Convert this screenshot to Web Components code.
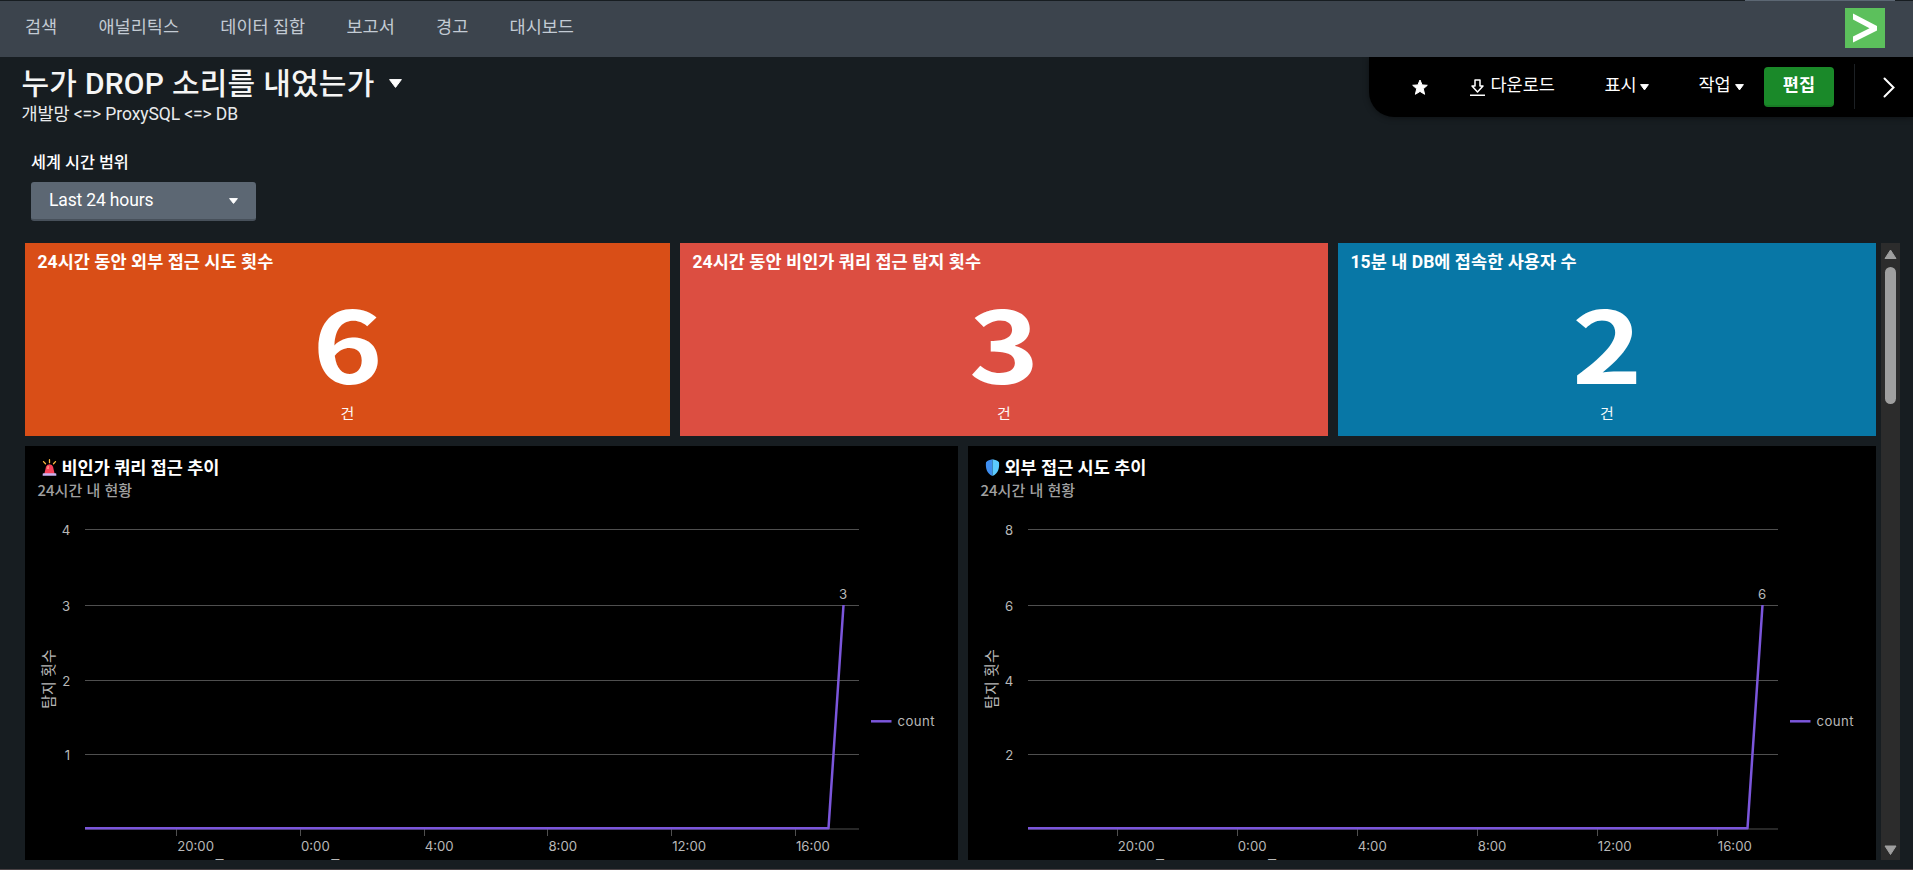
<!DOCTYPE html>
<html lang="ko">
<head>
<meta charset="utf-8">
<title>대시보드</title>
<style>
html,body{margin:0;height:100%}
body{background:#171d21;color:#fff;font-family:Roboto,"Noto Sans CJK KR",sans-serif;font-size:17.5px;overflow:hidden}
</style>
</head>
<body>
<dash-app></dash-app>
<script>
const define=(name,html)=>customElements.define(name,class extends HTMLElement{
  connectedCallback(){
    if(this.shadowRoot)return;
    const t=document.createElement('template');
    t.innerHTML=typeof html==='function'?html(this):html;
    this.attachShadow({mode:'open'}).append(t.content.cloneNode(true));
  }
});

define('nav-link',`<style>:host{display:block;color:#c3cbd4;line-height:26px;white-space:nowrap}</style><slot></slot>`);

define('brand-logo',`<style>:host{display:block;width:40px;height:40px;background:#5cc05c}svg{display:block}</style>
<svg width="40" height="40" viewBox="0 0 40 40"><path fill="#fff" d="M8 5.500 32 18v4.500L8 34.500v-6L24.500 20.200 8 11.500z"/></svg>`);

define('app-nav',`<style>
:host{display:flex;box-sizing:border-box;height:57px;background:#3c444d;border-top:1px solid #171d21;padding:7px 28px 0 25px;align-items:flex-start;position:relative}
nav{display:flex;gap:41.3px;padding-top:6px;flex:1}
i{position:absolute;top:-1px;left:1745px;width:150px;height:1px;background:#5c6773}
</style><nav><nav-link>검색</nav-link><nav-link>애널리틱스</nav-link><nav-link>데이터 집합</nav-link><nav-link>보고서</nav-link><nav-link>경고</nav-link><nav-link>대시보드</nav-link></nav><brand-logo></brand-logo><i></i>`);

define('caret-down',el=>{const w=+el.getAttribute('w'),h=+el.getAttribute('h');return `<style>:host{display:block;flex:none}svg{display:block}</style>
<svg width="${w}" height="${h}" viewBox="0 0 ${w} ${h}"><path fill="#fff" stroke="#fff" stroke-linejoin="round" d="M.6 .6H${w-.6}L${w/2} ${h-.6}z"/></svg>`});

define('tool-bar',`<style>
:host{display:flex;box-sizing:border-box;width:544px;height:60px;background:#000;border-bottom-left-radius:25px;box-shadow:0 1px 6px #0006;padding:10px 18px 0 43px;align-items:flex-start}
svg{display:block;flex:none}
.t{display:flex;align-items:flex-start;line-height:26px;padding-top:5px;white-space:nowrap}
.star{margin-top:12px}
.dl{margin-left:42px}.dl svg{margin:7px 5.500px 0 0}
.v{margin-left:49.500px;width:44.500px;justify-content:space-between}.w{margin-left:49.500px;width:46px;justify-content:space-between}
caret-down{margin-top:12px}
b{box-sizing:border-box;width:70px;height:40px;border-radius:4px;background:#1a8929;border-bottom:2px solid #187c25;text-align:center;line-height:37px;margin-left:19.500px;font-weight:700}
hr{margin:-3px 0 0 20px;border:0;width:1px;height:45px;background:#1c2024}
.ch{margin:10px 0 0 28px}
</style>
<svg class="star" width="16" height="17" viewBox="0 0 16 17"><path fill="#fff" stroke="#fff" stroke-linejoin="round" d="M8 1l2.100 4.900 5.200.4-4 3.500 1.300 5.500L8 12.400l-4.600 2.900 1.300-5.500-4-3.500 5.200-.4z"/></svg>
<div class="t dl"><svg width="15" height="18" viewBox="0 0 15 18"><path fill="none" stroke="#fff" stroke-width="1.500" stroke-linejoin="round" d="M5 1h5v6h3L7.500 12.900 2 7h3z"/><path fill="#fff" d="M0 15.500h15V17H0z"/></svg>다운로드</div>
<div class="t v">표시<caret-down w="9" h="6.5"></caret-down></div>
<div class="t w">작업<caret-down w="9" h="6.5"></caret-down></div>
<b>편집</b><hr>
<svg class="ch" width="12" height="21" viewBox="0 0 12 21"><path fill="none" stroke="#fff" stroke-width="2" stroke-linecap="round" d="M1.500 1.500 10.500 10.500 1.500 19.500"/></svg>`);

define('page-head',`<style>
:host{display:flex;height:75px;justify-content:space-between}
.l{padding:9px 0 0 21.500px}
h1{display:flex;align-items:flex-start;gap:16px;margin:0;font-size:30px;font-weight:500;line-height:36px;white-space:nowrap;color:#f5f5f5;letter-spacing:.25px}
h1 span{width:351px}
caret-down{margin-top:13px}
p{margin:-1px 0 0;font-size:17.500px;line-height:26px;white-space:nowrap;color:#e8eaec;letter-spacing:-.1px}
</style>
<div class="l"><h1><span>누가 DROP 소리를 내었는가</span><caret-down w="13" h="9"></caret-down></h1><p>개발망 &lt;=&gt; ProxySQL &lt;=&gt; DB</p></div>
<tool-bar></tool-bar>`);

define('time-input',`<style>
:host{display:block;height:111px;box-sizing:border-box;padding:18px 0 0 31px}
label{display:block;font-size:16.250px;font-weight:500;line-height:26px;margin-bottom:6px}
div{display:flex;box-sizing:border-box;width:225px;height:39px;border-radius:3px;background:#5c6773;border-bottom:2px solid #47505a;padding:0 18px;justify-content:space-between;align-items:flex-start;line-height:36px}
span{letter-spacing:-.15px}
caret-down{margin-top:16px}
</style><label>세계 시간 범위</label><div><span>Last 24 hours</span><caret-down w="9" h="6"></caret-down></div>`);

define('stat-card',el=>`<style>
:host{display:block;box-sizing:border-box;height:193px;background:var(--c);text-align:center;padding-top:6px}
h2{margin:0 0 0 12.500px;text-align:left;font-size:17.500px;font-weight:700;line-height:26px;white-space:nowrap;letter-spacing:.04px}
.n{font:700 100px/110px "Noto Sans CJK KR",sans-serif;margin-top:10.500px;transform:scaleX(1.19)}
.u{font-size:15px;line-height:22px;margin-top:7.500px;opacity:.95}
</style><h2><slot></slot></h2><div class="n">${el.getAttribute('value')}</div><div class="u">건</div>`);

const icons={
siren:`<path stroke="#fbb83e" stroke-width="1.300" stroke-linecap="round" d="M7.500 .7v3M1.500 2.600l2 2.200M13.500 2.600l-2 2.200"/><path fill="#f8415a" d="M2.300 15 4 7.800Q4.600 5.300 7.500 5.300T11 7.800L12.700 15z"/><path fill="#ff8a7a" d="M5.500 7h1.500v3H4.800z"/><path fill="#cbb2f2" d="M1.500 14.200h12q.8 0 .8.900v1.700H.7v-1.700q0-.9.800-.9z"/>`,
shield:`<path fill="#3e8ef0" d="M7.500 .3C5 .8 2.500 1.300 1 3.200 .4 8.500 1.500 14.500 7.500 17z"/><path fill="#5ccbff" d="M7.500 .3C10 .8 12.500 1.300 14 3.200 14.600 8.500 13.500 14.500 7.500 17z"/>`};

define('chart-panel',el=>{
  const w=+el.getAttribute('w'),step=+el.getAttribute('step'),t0=+el.getAttribute('tick'),gap=+el.getAttribute('gap');
  const right=w-+el.getAttribute('inset'),ys=[83.5,159.5,234.5,308.5];
  const y0=382.5,x1=right-30.5,x2=right-15.5,peak=step*3;
  return `<style>
:host{display:block;position:relative;height:414px;width:${w}px;background:#000;overflow:hidden}
header{padding:8.500px 0 0 12.500px}
h2{display:flex;gap:4.500px;margin:0;padding-left:4.500px;font-size:17.500px;font-weight:700;line-height:26px;white-space:nowrap}
h2 svg{margin-top:4.500px}
p{margin:0;color:#a0a0a0;font-size:15px;font-weight:500;line-height:17px;white-space:nowrap;font-family:"Noto Sans CJK KR",sans-serif}
.plot{position:absolute;left:0;top:0}
text{font-family:Inter,"Noto Sans CJK KR",sans-serif;font-size:13.200px;fill:#b8b8b8}
</style>
<svg class="plot" width="${w}" height="414" viewBox="0 0 ${w} 414">
<g stroke="#4f4f4f">${ys.map(y=>`<path d="M60 ${y}H${right}"/>`).join('')}<path d="M60 ${y0+.5}H${right}"/>
${[0,1,2,3,4,5].map(i=>`<path d="M${Math.floor(t0+i*gap)+.5} 383v7"/>`).join('')}</g>
${ys.map((y,i)=>`<text x="45.200" y="${y+5}" text-anchor="end">${step*(4-i)}</text>`).join('')}
${['20:00','0:00','4:00','8:00','12:00','16:00'].map((s,i)=>`<text x="${t0+i*gap+.5}" y="405">${s}</text>`).join('')}
<text x="${t0+2}" y="423.500">5/31 (금)</text><text x="${t0+gap+2}" y="423.500">6/1 (토)</text>
<text transform="translate(29 233) rotate(-90)" text-anchor="middle" style="font-size:15px">탐지 횟수</text>
<path fill="none" stroke="#7b56db" stroke-width="2.500" stroke-linejoin="round" d="M60 382.300H${x1}L${x2} 159"/>
<text x="${x2-.5}" y="153" text-anchor="middle">${peak}</text>
<path stroke="#7b56db" stroke-width="2.500" d="M${right+12} 275.300h20.500"/>
<text x="${right+38.500}" y="280" textLength="37">count</text>
</svg>
<header><h2><svg width="15" height="18" viewBox="0 0 15 18">${icons[el.getAttribute('icon')]}</svg><span><slot></slot></span></h2><p>24시간 내 현황</p></header>`});

define('scroll-bar',`<style>
:host{display:flex;flex-direction:column;align-items:center;box-sizing:border-box;width:19px;height:617px;background:#2c2c2c;padding:6px 0 4px}
i{width:11px;height:137px;border-radius:6px;background:#9f9f9f;margin-top:8px}
svg{display:block}.d{margin-top:auto}
</style><svg width="13" height="10"><path fill="#9f9f9f" stroke="#9f9f9f" stroke-linejoin="round" d="M1 9.500 6.500 1 12 9.500z"/></svg><i></i>
<svg class="d" width="13" height="11"><path fill="#9f9f9f" stroke="#9f9f9f" stroke-linejoin="round" d="M1 1 6.500 9.500 12 1z"/></svg>`);

define('dash-grid',`<style>
:host{display:flex;padding-left:25px;gap:5px;height:617px}
.g{display:flex;flex-direction:column;gap:10px}
.a{display:grid;grid-template-columns:645px 648px 538px;gap:10px}
.b{display:flex;gap:10px}
</style><div class="g"><div class="a">
<stat-card value="6" style="--c:#d94e17">24시간 동안 외부 접근 시도 횟수</stat-card>
<stat-card value="3" style="--c:#dc4e41">24시간 동안 비인가 쿼리 접근 탐지 횟수</stat-card>
<stat-card value="2" style="--c:#0877a6">15분 내 DB에 접속한 사용자 수</stat-card></div>
<div class="b"><chart-panel w="933" inset="99" step="1" tick="151.7" gap="123.75" icon="siren">비인가 쿼리 접근 추이</chart-panel>
<chart-panel w="908" inset="98" step="2" tick="149.3" gap="120" icon="shield">외부 접근 시도 추이</chart-panel></div></div>
<scroll-bar></scroll-bar>`);

define('dash-app',`<style>:host{display:block;height:870px;box-sizing:border-box;border-bottom:1px solid #4a4245}</style>
<app-nav></app-nav><page-head></page-head><time-input></time-input><dash-grid></dash-grid>`);
</script>
</body>
</html>
